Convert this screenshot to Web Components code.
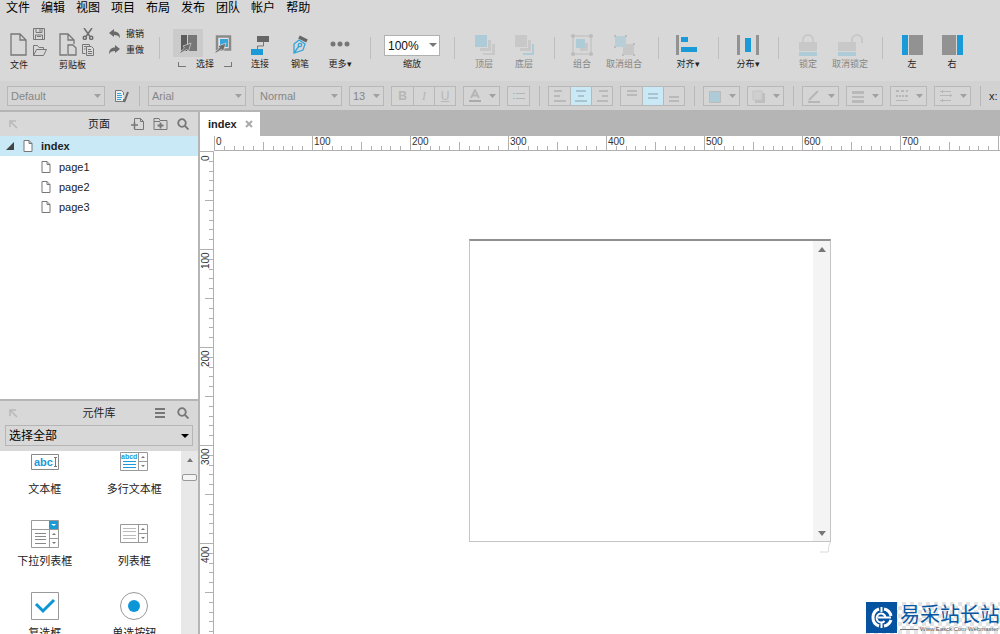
<!DOCTYPE html>
<html lang="zh-CN">
<head>
<meta charset="utf-8">
<title>index</title>
<style>
html, body { margin: 0; height: 100%; }
body {
  font-family: "Liberation Sans", "Noto Sans CJK SC", sans-serif;
  font-size: 11px; color: #222; background: #fff; overflow: hidden;
}
</style>
</head>
<body>
<axure-app></axure-app>

<script>
const define = (name, html, setup) => {
  const tpl = document.createElement('template');
  tpl.innerHTML = '<style>*{box-sizing:border-box}button{font:inherit;color:inherit;background:none;border:0;padding:0;margin:0}svg{display:block;flex:none}</style>' + html;
  customElements.define(name, class extends HTMLElement {
    constructor() {
      super();
      this.attachShadow({ mode: 'open' }).append(tpl.content.cloneNode(true));
    }
    connectedCallback() { if (setup) setup(this, this.shadowRoot); }
  });
};

/* ---------- menu ---------- */
define('menu-bar', `
<style>
:host { display: block; background: #d8d8d8; }
nav { display: flex; gap: 11px; padding: 0 6px; height: 16px; }
a { color: #000; text-decoration: none; font-size: 12px; line-height: 16px; white-space: nowrap; }
</style>
<nav></nav>`, (host, root) => {
  root.querySelector('nav').innerHTML = host.getAttribute('items').split(' ')
    .map(t => '<a href="#">' + t + '</a>').join('');
});

/* ---------- main toolbar parts ---------- */
define('tool-button', `
<style>
:host { display: block; flex: none; width: 40px; }
:host([wide]) { width: 44px; }
:host([wider]) { width: 48px; }
:host([narrow]) { width: 36px; }
button { width: 100%; display: flex; flex-direction: column; align-items: center; font-size: 9px; line-height: 12px; color: #222; white-space: nowrap; }
:host([off]) button { color: #858585; }
.icon { height: 24px; display: flex; align-items: center; margin: 1px 0; }
</style>
<button><span class="icon"><slot name="icon"></slot></span><span><slot></slot></span></button>`);

define('tool-sep', `
<style>
:host { display: flex; flex: none; width: 20px; justify-content: center; padding-top: 5px; }
i { width: 1px; height: 22px; background: #bebebe; }
</style><i></i>`);

define('file-group', `
<style>
:host { display: grid; flex: none; grid-template-columns: 17px 14px; column-gap: 6px; grid-template-rows: 14px 18px 14px; font-size: 9px; }
.big { grid-row: 1 / 3; padding-top: 3px; }
.a, .b { display: flex; align-items: center; }
.label { grid-column: 1 / 3; line-height: 12px; }
</style>
<button class="big" aria-label="big"><slot name="big"></slot></button>
<button class="a" aria-label="top"><slot name="top"></slot></button>
<button class="b" aria-label="bottom"><slot name="bottom"></slot></button>
<span class="label"><slot></slot></span>`);

define('select-modes', `
<style>
:host { display: grid; flex: none; width: 67px; grid-template-columns: 30px 30px; column-gap: 5px; grid-template-rows: 28px 13px; margin-top: -3px; font-size: 9px; }
button { display: grid; place-items: center; }
button.on { background: #cbcbcb; }
.label { grid-column: 1 / 3; display: flex; align-items: end; justify-content: space-between; padding: 0 6px 0 5px; line-height: 12px; }
.l, .r { width: 8px; height: 5px; margin-bottom: 3px; border: solid #777; border-width: 0 0 1px 1px; }
.r { border-width: 0 1px 1px 0; }
</style>
<button class="on" aria-label="contain"><svg width="20" height="20" viewBox="0 0 20 20"><path d="M3 2h6v16H3z" fill="#5c5c5c"/><path d="M10 2h9v16h-9z" fill="#777"/><path d="M1.500 19.500l5-4.500-1.500-2 8-3-2.500 8-2-1.500-5.500 3.500z" fill="#6e6e6e" stroke="#cbcbcb" stroke-width=".8"/></svg></button>
<button aria-label="intersect"><svg width="20" height="20" viewBox="0 0 20 20"><path d="M4 3.500h13v13H4z" fill="#e4e4e4" stroke="#8a8a8a" stroke-width="2.500"/><path d="M7 6h8v8H7z" fill="#35a5dc"/><path d="M1.500 19.500l5-4.500-1.500-2 8-3-2.500 8-2-1.500-5.500 3.500z" fill="#6e6e6e" stroke="#d8d8d8" stroke-width=".8"/></svg></button>
<span class="label"><i class="l"></i><span>选择</span><i class="r"></i></span>`);

define('zoom-box', `
<style>
:host { display: flex; flex: none; width: 64px; flex-direction: column; align-items: center; font-size: 9px; line-height: 12px; }
.box { display: grid; width: 56px; height: 21px; margin: 3px 0 2px; border: 1px solid #b0b0b0; background: #fff; align-items: center; }
.box > * { grid-area: 1 / 1; }
select { appearance: none; border: 0; background: none; font: 12px "Liberation Sans", sans-serif; color: #111; padding: 0 0 0 3px; width: 100%; height: 100%; }
svg { justify-self: end; margin-right: 2px; pointer-events: none; }
</style>
<span class="box"><select id="z"><option>100%</option></select><svg width="8" height="5"><path d="M0 0h8L4 4z" fill="#777"/></svg></span>
<label for="z">缩放</label>`);

define('tool-bar', `
<style>
:host { display: flex; background: #d8d8d8; height: 65px; padding: 16px 0 0 10px; overflow: hidden; align-items: flex-start; }
.files { display: flex; gap: 12px; margin-top: -5px; }
.history { display: flex; flex-direction: column; gap: 4px; margin-top: -4px; padding: 0 5px 0 13px; }
.history button { display: flex; align-items: center; gap: 5px; font-size: 9px; line-height: 12px; }
.gap { width: 4px; flex: none; }
</style>
<div class="files">
  <file-group>文件
    <svg slot="big" width="17" height="23" viewBox="0 0 17 23" fill="none" stroke="#777" stroke-width="1.300"><path d="M1 1h9l6 6v15H1zM10 1v6h6"/></svg>
    <svg slot="top" width="12" height="12" viewBox="0 0 12 12" fill="none" stroke="#777"><path d="M.5.5h11v11H.5zM3 .5v4h6v-4M7 1v3M2.500 11V7h7v4M4 8.500h4"/></svg>
    <svg slot="bottom" width="14" height="11" viewBox="0 0 14 11" fill="none" stroke="#777"><path d="M.5 10.500v-10h4l1.500 2h4.500v2M.5 10.500l3-6h10l-3 6z"/></svg>
  </file-group>
  <file-group>剪贴板
    <svg slot="big" width="18" height="23" viewBox="0 0 18 23" fill="none" stroke="#777" stroke-width="1.300"><path d="M8 22H1V1h8l6 6v4M9 1v6h6"/><path d="M9 12h5l3 3v7H9z"/></svg>
    <svg slot="top" width="12" height="12" viewBox="0 0 12 12" fill="none" stroke="#6e6e6e" stroke-width="1.500"><path d="M2 0l6 8.500M10 0L4 8.500"/><circle cx="2.800" cy="9.800" r="1.600"/><circle cx="9.200" cy="9.800" r="1.600"/></svg>
    <svg slot="bottom" width="12" height="12" viewBox="0 0 12 12" fill="none" stroke="#777"><path d="M3.500 9.500h-3v-9h7v2M4.500 2.500h5l2 2v7h-7zM6 5.500h3M6 7.500h4M6 9.500h4M2 2.500h2M2 5h1.500"/></svg>
  </file-group>
</div>
<div class="history">
  <button><svg width="12" height="10" viewBox="0 0 12 10"><path d="M0 4l5-4v2.500c4 0 6 2 6 7-1-3-3-3.500-6-3.500v2z" fill="#6a6a6a"/></svg>撤销</button>
  <button><svg width="12" height="10" viewBox="0 0 12 10"><path d="M11 4L6 0v2.500c-4 0-6 2-6 7 1-3 3-3.500 6-3.500v2z" fill="#6a6a6a"/></svg>重做</button>
</div>
<tool-sep></tool-sep><span class="gap"></span>
<select-modes></select-modes>
<tool-button>连接<svg slot="icon" width="20" height="20" viewBox="0 0 20 20"><path d="M7 1h12v6H7z" fill="#666"/><path d="M13.500 7v4h-6v4" fill="none" stroke="#777"/><path d="M1 14h12v6H1z" fill="#1a9ad7"/></svg></tool-button>
<tool-button>钢笔<svg slot="icon" width="18" height="20" viewBox="0 0 18 20" fill="none" stroke="#35a5dc" stroke-width="1.300"><path d="M3 18L3 9l5-4 6 4-2 6zM3 18l5-7"/><circle cx="9" cy="10" r="1.700"/><path d="M8 2l8 4" stroke="#666" stroke-width="3.500"/></svg></tool-button>
<tool-button>更多▾<svg slot="icon" width="20" height="20" viewBox="0 0 20 20" fill="#777"><circle cx="3" cy="9" r="2.500"/><circle cx="10" cy="9" r="2.500"/><circle cx="17" cy="9" r="2.500"/></svg></tool-button>
<tool-sep></tool-sep>
<zoom-box></zoom-box>
<tool-sep></tool-sep>
<tool-button off>顶层<svg slot="icon" width="21" height="20" viewBox="0 0 21 20" fill="#c8c8c8"><path d="M14 5h3v11H6v-3h8zM18 9h3v11H9v-2h9z"/><path d="M1 0h12v12H1z" fill="#aecbd8"/></svg></tool-button>
<tool-button off>底层<svg slot="icon" width="21" height="20" viewBox="0 0 21 20" fill="#c8c8c8"><path d="M1 0h12v12H1zM14 5h3v11H6v-3h8z"/><path d="M18 9h2v11H9v-2h9z" fill="#aecbd8"/></svg></tool-button>
<tool-sep></tool-sep>
<tool-button off narrow>组合<svg slot="icon" width="22" height="22" viewBox="0 0 22 22"><path d="M2 2h18v18H2z" fill="none" stroke="#bcbcbc"/><path d="M14 9h3v8H9v-3h5z" fill="#c8c8c8"/><path d="M5 5h9v9H5z" fill="#aecbd8"/><g fill="#bcbcbc"><circle cx="2" cy="2" r="2"/><circle cx="20" cy="2" r="2"/><circle cx="2" cy="20" r="2"/><circle cx="20" cy="20" r="2"/></g></svg></tool-button>
<tool-button off wider>取消组合<svg slot="icon" width="22" height="22" viewBox="0 0 22 22"><path d="M10 10h11v11H10z" fill="#c8c8c8"/><path d="M2 2h11v11H2z" fill="#b9cfd8"/><g fill="#bcbcbc"><path d="M1 1h2v2H1zM12 1h2v2h-2zM1 12h2v2H1zM20 9h2v2h-2zM9 20h2v2H9zM20 20h2v2h-2z"/></g></svg></tool-button>
<tool-sep></tool-sep>
<tool-button>对齐▾<svg slot="icon" width="24" height="20" viewBox="0 0 24 20"><path d="M0 0h3v20H0z" fill="#929292"/><path d="M5 2h7v5H5zM5 12h16v5H5z" fill="#1a9ad7"/></svg></tool-button>
<tool-sep></tool-sep>
<tool-button>分布▾<svg slot="icon" width="22" height="20" viewBox="0 0 22 20"><path d="M0 0h3v20H0zM19 0h3v20h-3z" fill="#929292"/><path d="M8 3h6v14H8z" fill="#1a9ad7"/></svg></tool-button>
<tool-sep></tool-sep>
<tool-button off>锁定<svg slot="icon" width="18" height="22" viewBox="0 0 18 22"><path d="M4 8V6a5 5 0 0 1 10 0v2" fill="none" stroke="#c8c8c8" stroke-width="2"/><path d="M0 8h18v9H0z" fill="#c8c8c8"/><path d="M0 18h18v4H0z" fill="#aecbd8"/></svg></tool-button>
<tool-button off wide>取消锁定<svg slot="icon" width="26" height="22" viewBox="0 0 26 22"><path d="M15 8V6a5 5 0 0 1 10 0v3" fill="none" stroke="#c8c8c8" stroke-width="2"/><path d="M1 8h18v9H1z" fill="#c8c8c8"/><path d="M1 18h18v4H1z" fill="#aecbd8"/></svg></tool-button>
<tool-sep></tool-sep>
<tool-button>左<svg slot="icon" width="21" height="20" viewBox="0 0 21 20"><path d="M0 0h6v20H0z" fill="#1a9ad7"/><path d="M7 0h14v20H7z" fill="#929292"/></svg></tool-button>
<tool-button>右<svg slot="icon" width="21" height="20" viewBox="0 0 21 20"><path d="M15 0h6v20h-6z" fill="#1a9ad7"/><path d="M0 0h14v20H0z" fill="#929292"/></svg></tool-button>`);

/* ---------- style bar ---------- */
define('drop-down', `
<style>
:host { display: grid; flex: none; height: 20px; border: 1px solid #b8b8b8; background: #d5d5d5; align-items: center; width: 98px; }
:host([size=m]) { width: 89px; }
:host([size=s]) { width: 35px; }
:host > * { grid-area: 1 / 1; }
select { appearance: none; border: 0; background: none; width: 100%; height: 18px; padding: 0 0 0 3px; font: inherit; color: #868686; }
:host([size=m]) select { padding-left: 6px; }
svg { justify-self: end; margin-right: 3px; pointer-events: none; }
</style>
<select disabled style="opacity:1"><option></option></select>
<svg width="7" height="4"><path d="M0 0h7L3.500 4z" fill="#a0a0a0"/></svg>`, (host, root) => {
  root.querySelector('option').textContent = host.getAttribute('value');
  root.querySelector('select').setAttribute('aria-label', host.getAttribute('label'));
});

define('menu-button', `
<style>
:host { display: block; flex: none; width: 37px; }
button { display: flex; width: 100%; height: 20px; border: 1px solid #b8b8b8; background: #d5d5d5; align-items: center; justify-content: space-between; padding: 0 3px 0 4px; }
</style>
<button disabled><slot></slot><svg width="7" height="4"><path d="M0 0h7L3.500 4z" fill="#a0a0a0"/></svg></button>`);

define('button-group', `
<style>
:host { display: flex; flex: none; height: 20px; border: 1px solid #b8b8b8; background: #d5d5d5; }
</style>
<slot></slot>`);

define('bar-sep', `
<style>:host { display: flex; flex: none; width: 4px; height: 20px; justify-content: center; } i { width: 1px; background: #b8b8b8; }</style><i></i>`);

define('style-bar', `
<style>
:host { display: flex; height: 29px; padding: 5px 7px 4px; gap: 7px; background: #d2d2d2; overflow: hidden; }
.edit { width: 18px; flex: none; display: grid; place-items: center; }
.x { line-height: 20px; font-size: 11px; flex: none; }
button-group button { width: 21px; display: grid; place-items: center; font-size: 12px; color: #b6b6b6; }
button-group button + button { border-left: 1px solid #b8b8b8; }
button-group button.on { background: #c9e9f6; }
.serif { font-family: "Liberation Serif", serif; }
</style>
<drop-down value="Default" label="Style"></drop-down>
<button class="edit" aria-label="Edit style"><svg width="15" height="14" viewBox="0 0 15 14" fill="none" stroke="#777"><path d="M9.500 10v2.500h-8v-11h6l2 2V6" fill="#eee"/><path d="M3 4.500h4M3 6.500h5M3 8.500h5M3 10.500h4" stroke="#35a5dc"/><path d="M14 3l-3 8-1 2" stroke-width="2" stroke="#6a6a6a"/></svg></button>
<bar-sep></bar-sep>
<drop-down value="Arial" label="Font"></drop-down>
<drop-down value="Normal" label="Weight" size="m"></drop-down>
<drop-down value="13" label="Size" size="s"></drop-down>
<button-group><button><b>B</b></button><button><i class="serif">I</i></button><button><u>U</u></button></button-group>
<menu-button><svg width="14" height="14" viewBox="0 0 14 14"><path d="M3 9L7 1l4 8M4.500 6.500h5" fill="none" stroke="#b5b5b5" stroke-width="1.800"/><path d="M1 11h12v2H1z" fill="#aaa"/></svg></menu-button>
<button-group><button aria-label="list"><svg width="12" height="10" fill="#b6b6b6"><path d="M3 2h9v1H3zM3 7h9v1H3z"/><path d="M0 2h2v1H0zM0 7h2v1H0z" fill="#8fc0d8"/></svg></button></button-group>
<bar-sep></bar-sep>
<button-group>
  <button aria-label="left"><svg width="12" height="12" fill="#b9b9b9"><path d="M0 0h8v2H0zM0 5h6v2H0zM0 10h12v2H0z"/></svg></button>
  <button class="on" aria-label="center"><svg width="12" height="12" fill="#a9c4ce"><path d="M1 0h10v2H1zM3 5h6v2H3zM0 10h12v2H0z"/></svg></button>
  <button aria-label="right"><svg width="12" height="12" fill="#b9b9b9"><path d="M3 0h9v2H3zM6 5h6v2H6zM1 10h11v2H1z"/></svg></button>
</button-group>
<button-group>
  <button aria-label="top"><svg width="10" height="12" fill="#b9b9b9"><path d="M0 0h10v2H0zM0 4h10v2H0z"/></svg></button>
  <button class="on" aria-label="middle"><svg width="10" height="12" fill="#a9c4ce"><path d="M0 3h10v2H0zM0 7h10v2H0z"/></svg></button>
  <button aria-label="bottom"><svg width="10" height="12" fill="#b9b9b9"><path d="M0 6h10v2H0zM0 10h10v2H0z"/></svg></button>
</button-group>
<bar-sep></bar-sep>
<menu-button><svg width="13" height="13"><path d="M1.500 1.500h11v11h-11z" fill="#aecbd8" stroke="#bbb"/></svg></menu-button>
<menu-button><svg width="13" height="13"><path d="M3 3h10v10H3z" fill="#bebebe"/><path d="M1 1h9v9H1z" fill="#cfcfcf" stroke="#c3c3c3"/></svg></menu-button>
<bar-sep></bar-sep>
<menu-button><svg width="13" height="13" stroke="#b6b6b6" fill="none"><path d="M11 1L3 9l-1 1" stroke-width="2"/><path d="M1 12h12" stroke-width="2"/></svg></menu-button>
<menu-button><svg width="14" height="13" fill="#b9b9b9"><path d="M1 1h12v3H1zM1 6h12v2H1zM1 10h12v3H1z"/></svg></menu-button>
<menu-button><svg width="14" height="12" fill="#b6b6b6"><path d="M1 0h3v2H1zM6 0h3v2H6zM11 0h2v2h-2zM1 5h2v2H1zM4 5h2v2H4zM7 5h2v2H7zM10 5h3v2h-3zM1 10h12v1H1z"/></svg></menu-button>
<menu-button><svg width="14" height="12" fill="none" stroke="#b6b6b6"><path d="M1 1.500h11M1 5.500h12M1 10.500h11M3.500 0v3M11.500 4v3M3.500 9v3"/></svg></menu-button>
<bar-sep></bar-sep>
<span class="x">x:</span>`);

/* ---------- side panels ---------- */
define('panel-header', `
<style>
:host { display: grid; grid-template-columns: 1fr auto 1fr; align-items: center; height: 24px; padding: 0 9px; background: #d8d8d8; }
h2 { margin: 0; font: inherit; line-height: 16px; color: #222; }
.tools { display: flex; gap: 9px; justify-content: flex-end; align-items: center; }
</style>
<svg width="9" height="9" viewBox="0 0 9 9" fill="none" stroke="#b8b8b8" stroke-width="1.500"><path d="M1 7V1h6M1 1l7 7"/></svg>
<h2></h2>
<span class="tools"><slot></slot></span>`, (host, root) => {
  root.querySelector('h2').textContent = host.getAttribute('heading');
});

define('page-row', `
<style>
:host { display: block; }
a { display: flex; align-items: center; height: 20px; padding-left: 41px; gap: 8px; color: #222; text-decoration: none; }
.twist { display: none; }
:host([root]) a { padding-left: 6px; background: #c9e9f6; font-weight: bold; }
:host([root]) .twist { display: block; margin-right: 1px; }
</style>
<a href="#"><svg class="twist" width="8" height="8"><path d="M8 0v8H0z" fill="#444"/></svg><svg width="10" height="12" viewBox="0 0 10 12" fill="#fff" stroke="#777"><path d="M1 .5h5l3 3v8H1zM6 .5v3h3"/></svg><span><slot></slot></span></a>`);

define('widget-item', `
<style>
:host { display: block; height: 72px; }
button { width: 100%; display: flex; flex-direction: column; align-items: center; gap: 5px; line-height: 16px; white-space: nowrap; color: #222; }
.icon { height: 28px; display: flex; align-items: center; }
</style>
<button><span class="icon"><slot name="icon"></slot></span><span><slot></slot></span></button>`);

define('side-bar', `
<style>
:host { display: grid; grid-template-rows: minmax(0, 11fr) minmax(0, 9fr); border-right: 2px solid #b5b5b5; background: #fff; min-height: 0; }
.children { padding-top: 1px; }
.lib { border-top: 2px solid #b5b5b5; display: flex; flex-direction: column; min-height: 0; }
panel-header { flex: none; }
.pick { flex: none; background: #d8d8d8; padding: 0 5px 5px; }
.box { display: grid; border: 1px solid #b5b5b5; height: 21px; align-items: center; }
.box > * { grid-area: 1 / 1; }
.box svg { justify-self: end; margin-right: 3px; pointer-events: none; }
select { appearance: none; border: 0; background: none; width: 100%; height: 19px; padding: 0 0 0 3px; font: inherit; font-size: 12px; color: #000; }
.list { flex: 1; min-height: 0; display: flex; overflow: hidden; }
.grid { flex: 1; display: grid; grid-template-columns: 1fr 1fr; align-content: start; padding-right: 2px; margin-top: -3px; }
.scroll { width: 17px; background: #e8e8e8; display: flex; flex-direction: column; align-items: center; padding-top: 7px; gap: 12px; }
.thumb { width: 15px; height: 7px; border: 1px solid #999; border-radius: 2px; background: #f4f4f4; }
text { font: bold 11px "Liberation Sans", sans-serif; fill: #1a9ad7; }
text.s { font-size: 7px; }
</style>
<section>
  <panel-header heading="页面">
    <svg width="13" height="14" viewBox="0 0 13 14" fill="none" stroke="#777"><path d="M3.500 5V1.500h6l3 3v8h-9V11M9.500 1.500v3h3"/><path d="M0 8h7M3.500 5v7" stroke-width="1.500"/></svg>
    <svg width="15" height="14" viewBox="0 0 15 14" fill="none" stroke="#777"><path d="M1 12.500v-11h5l1 2h7v9zM1 4.500h6"/><path d="M4.500 8.500h6M7.500 5.500v6" stroke-width="1.800"/></svg>
    <svg width="12" height="12" viewBox="0 0 12 12" fill="none" stroke="#777" stroke-width="1.800"><circle cx="5" cy="5" r="3.800"/><path d="M8 8l3.500 3.500"/></svg>
  </panel-header>
  <page-row root>index</page-row>
  <div class="children"><page-row>page1</page-row><page-row>page2</page-row><page-row>page3</page-row></div>
</section>
<section class="lib">
  <panel-header heading="元件库">
    <svg width="16" height="10" fill="#777"><path d="M3 0h10v2H3zM3 4h10v2H3zM3 8h10v2H3z"/></svg>
    <svg width="12" height="12" viewBox="0 0 12 12" fill="none" stroke="#777" stroke-width="1.800"><circle cx="5" cy="5" r="3.800"/><path d="M8 8l3.500 3.500"/></svg>
  </panel-header>
  <div class="pick"><div class="box"><select aria-label="元件库"><option>选择全部</option></select><svg width="8" height="4"><path d="M0 0h8L4 4z"/></svg></div></div>
  <div class="list">
    <div class="grid">
      <widget-item>文本框<svg slot="icon" width="28" height="16"><path d="M.5.5h27v15H.5z" fill="#fff" stroke="#888"/><text x="3" y="12">abc</text><path d="M23 3.500h3M24.500 3.500v9M23 12.500h3" stroke="#777" fill="none"/></svg></widget-item>
      <widget-item>多行文本框<svg slot="icon" width="28" height="20"><path d="M.5.5h27v18H.5zM18.500 .5v18M18.500 9.500h9" fill="#fff" stroke="#999"/><text class="s" x="1" y="7">abcd</text><path d="M3 9.500h13M3 12.500h13M3 15.500h13" stroke="#1a9ad7"/><path d="M21 6h4l-2-2zM21 13h4l-2 2z" fill="#777"/></svg></widget-item>
      <widget-item>下拉列表框<svg slot="icon" width="28" height="28"><path d="M.5.5h27v27H.5zM.5 9.500h27M18.500 9.500v18M18.500 18.500h9" fill="#fff" stroke="#999"/><path d="M18 1h9v8h-9z" fill="#1a9ad7"/><path d="M20 4h5l-2 2z" fill="#fff"/><path d="M4 13.500h11M4 16.500h11M4 19.500h11M4 23.500h11" stroke="#888"/><path d="M21 15h4l-2-2zM21 22h4l-2 2z" fill="#777"/></svg></widget-item>
      <widget-item>列表框<svg slot="icon" width="28" height="20"><path d="M.5.5h27v18H.5zM18.500 .5v18M18.500 9.500h9" fill="#fff" stroke="#999"/><path d="M3 4.500h13M3 7.500h13M3 11.500h13M3 14.500h13" stroke="#bbb"/><path d="M21 6h4l-2-2zM21 13h4l-2 2z" fill="#777"/></svg></widget-item>
      <widget-item>复选框<svg slot="icon" width="28" height="28"><path d="M.5.5h27v27H.5z" fill="#fff" stroke="#999"/><path d="M5 12l7 7L23 8" fill="none" stroke="#0c96d8" stroke-width="3"/></svg></widget-item>
      <widget-item>单选按钮<svg slot="icon" width="28" height="28"><circle cx="14" cy="14" r="13.500" fill="#fff" stroke="#999"/><circle cx="14" cy="14" r="6" fill="#0c96d8"/></svg></widget-item>
    </div>
    <div class="scroll"><svg width="6" height="4"><path d="M0 4h6L3 0z" fill="#777"/></svg><span class="thumb"></span></div>
  </div>
</section>`);

/* ---------- canvas ---------- */
/* Rulers: one tick every 10 units, 98 pixels to 100 units. */
define('page-ruler', `
<style>
:host { display: block; overflow: hidden; background: #fff; min-width: 0; min-height: 0; }
:host([axis=x]) { border-bottom: 1px solid #b0b0b0; border-left: 1px solid #b0b0b0; }
:host([axis=y]) { border-right: 1px solid #b0b0b0; border-top: 1px solid #b0b0b0; }
text { font: 10px "Liberation Sans", sans-serif; fill: #333; }
</style><svg shape-rendering="crispEdges"></svg>`, (host, root) => {
  const svg = root.querySelector('svg'), x = host.getAttribute('axis') === 'x';
  const count = x ? 81 : 50, length = count * 10;
  svg.setAttribute('width', x ? length : 14);
  svg.setAttribute('height', x ? 14 : length);
  let d = '', labels = '';
  for (let i = 0; i < count; i++) {
    const p = Math.round(i * 9.8) - 0.5, size = i % 10 === 0 ? 14 : i % 5 === 0 ? 8 : 4;
    if (i) d += x ? `M${p} 14v-${size}` : `M13 ${p}h-${size}`;
    if (i % 10 === 0 && i < 80) {
      const q = Math.round(p + 0.5);
      labels += x ? `<text x="${q + 1}" y="9">${i * 10}</text>`
        : `<text transform="translate(9 ${q + (i ? 19 : 9)}) rotate(-90)">${i * 10}</text>`;
    }
  }
  svg.innerHTML = `<path d="${d}" stroke="#b0b0b0" fill="none"/>${labels}`;
});

define('frame-widget', `
<style>
:host { display: flex; border: 1px solid #c4c4c4; border-top: 2px solid #909090; background: #fff; }
.view { flex: 1; }
.bar { width: 17px; background: #f4f4f4; display: flex; flex-direction: column; align-items: center; justify-content: space-between; padding: 6px 0 5px; }
</style>
<div class="view"></div>
<div class="bar"><svg width="8" height="5"><path d="M0 5h8L4 0z" fill="#777"/></svg><svg width="8" height="5"><path d="M0 0h8L4 5z" fill="#777"/></svg></div>`);

define('design-area', `
<style>
:host { display: grid; grid-template-columns: 14px minmax(0, 1fr); grid-template-rows: 24px 15px minmax(0, 1fr); min-width: 0; min-height: 0; }
.tabs { grid-column: 1 / 3; background: #b5b5b5; display: flex; }
.tab { background: #fff; display: flex; align-items: center; gap: 8px; padding: 0 7px 0 8px; font-weight: bold; }
.stage { position: relative; overflow: hidden; background: #fff; }
frame-widget { position: absolute; left: 255px; top: 88px; width: 362px; height: 303px; }
.mark { position: absolute; left: 606px; top: 391px; }
</style>
<div class="tabs"><button class="tab">index<svg width="8" height="8" stroke="#aaa" stroke-width="2"><path d="M1 1l6 6M7 1L1 7"/></svg></button></div>
<span></span><page-ruler axis="x"></page-ruler>
<page-ruler axis="y"></page-ruler>
<div class="stage"><frame-widget></frame-widget><svg class="mark" width="12" height="11" fill="none" stroke="#ddd"><path d="M10.500 0l-2 5v5M0 10h8"/></svg></div>`);

define('site-mark', `
<style>
:host { display: flex; height: 32px; background: repeating-conic-gradient(#e4e4e4 0 25%, #fff 0 50%) 0 0 / 8px 8px; color: #0a57a4; }
.sq { width: 31px; height: 31px; background: #0553a0; }
.txt { display: flex; flex-direction: column; padding-left: 3px; white-space: nowrap; }
b { font-size: 20px; line-height: 24px; font-weight: 400; font-family: "Noto Sans CJK SC", sans-serif; }
small { display: flex; align-items: center; gap: 2px; font-size: 6px; line-height: 6px; color: #555; }
small i { width: 18px; height: 1px; background: #777; }
</style>
<svg class="sq" viewBox="0 0 31 31" fill="none" stroke="#fff" stroke-width="3"><path d="M13 7a9 9 0 0 0 0 17M18 7a9 9 0 0 1 7 7M25 18a9 9 0 0 1-7 6"/><path d="M12 15.500h13M19.500 15a4.500 4.500 0 1 0-1 4M15.500 5v5M15.500 21v5" stroke-width="2"/></svg>
<span class="txt"><b>易采站长站</b><small><i></i>Www.Easck.Com Webmaster</small></span>`);

define('axure-app', `
<style>
:host { display: grid; grid-template-rows: auto auto auto minmax(0, 1fr); height: 100vh; position: relative; overflow: hidden; }
main { display: grid; grid-template-columns: 200px minmax(0, 1fr); border-top: 2px solid #b5b5b5; min-height: 0; }
site-mark { position: absolute; right: 0; bottom: 0; }
</style>
<menu-bar items="文件 编辑 视图 项目 布局 发布 团队 帐户 帮助"></menu-bar>
<tool-bar></tool-bar>
<style-bar></style-bar>
<main><side-bar></side-bar><design-area></design-area></main>
<site-mark></site-mark>`);
</script>
</body>
</html>
